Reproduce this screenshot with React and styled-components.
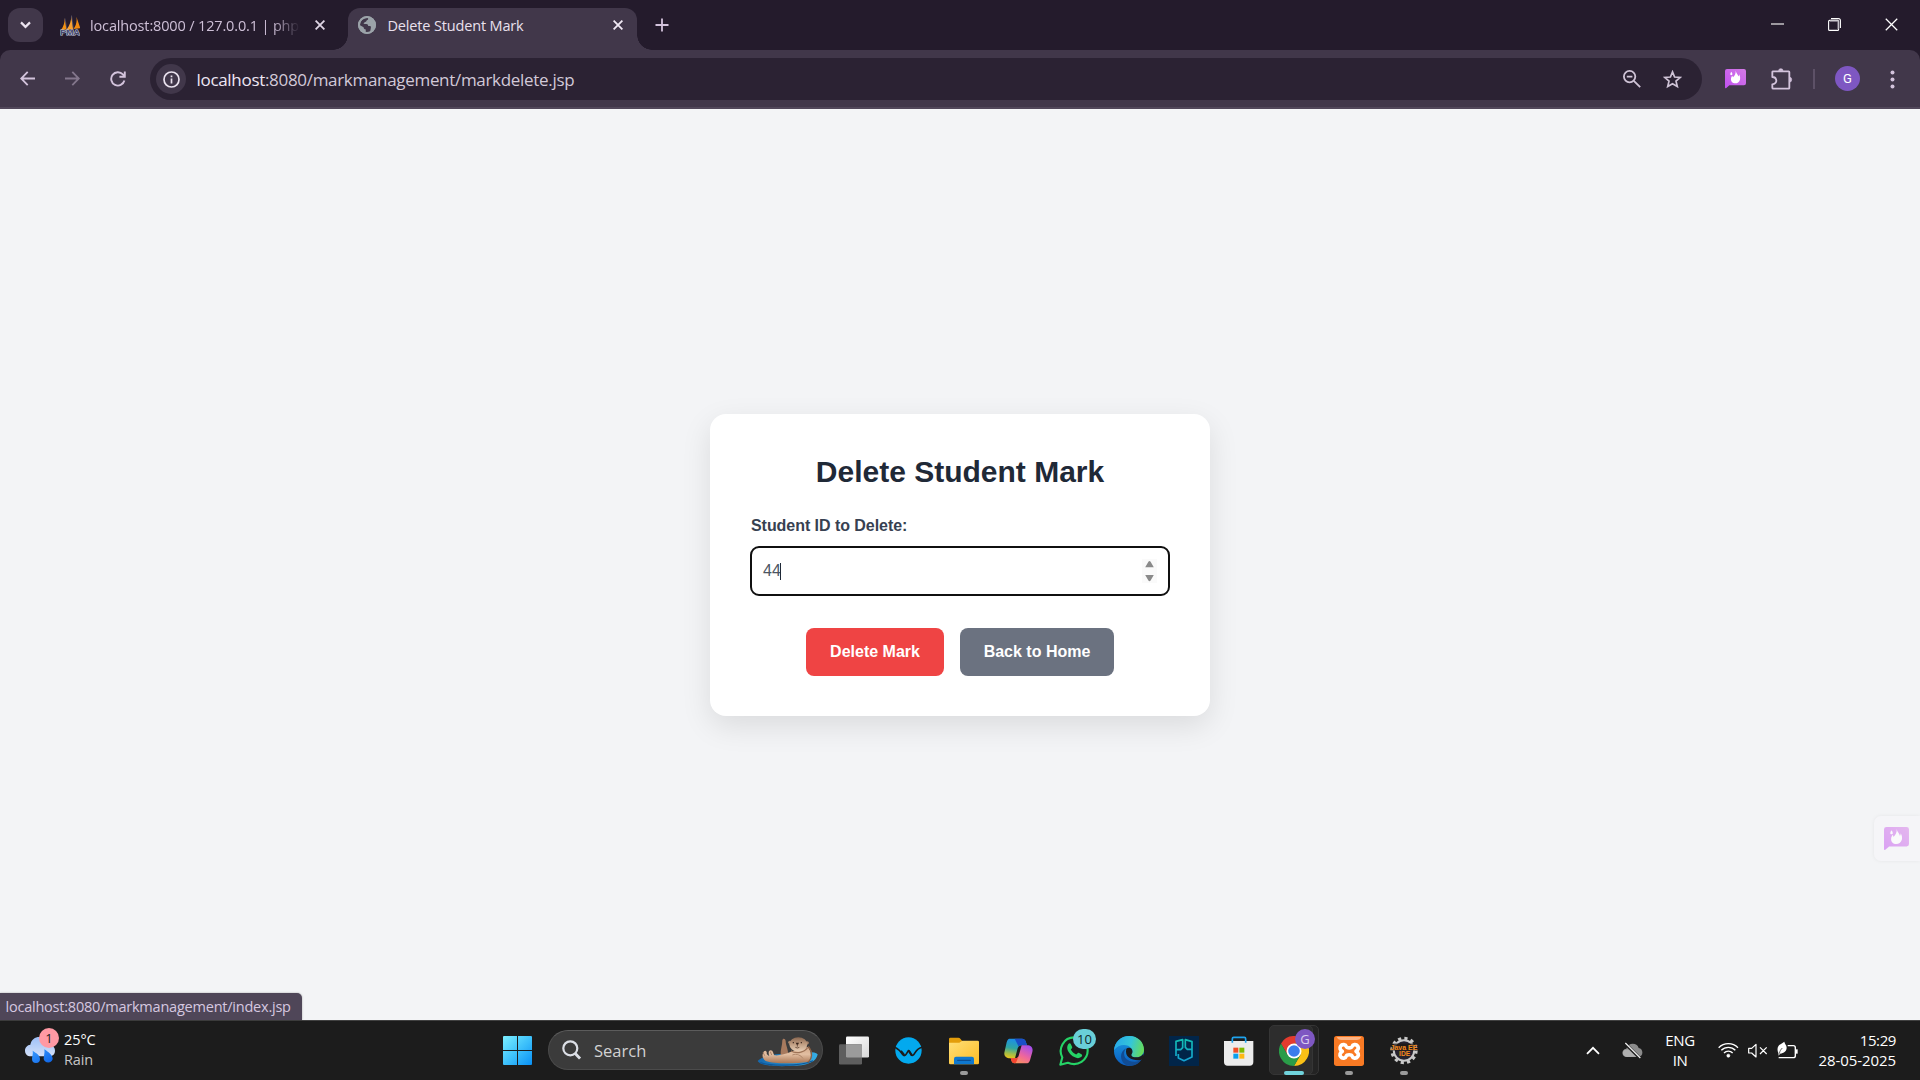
import React from "react";
import styled, { createGlobalStyle, css } from "styled-components";

const Global = createGlobalStyle`
  * { box-sizing: border-box; }
  html, body { margin: 0; padding: 0; background: #f3f4f6; }
  body { overflow: hidden; }
  svg { display: block; flex: none; }
`;

const ui = `"Open Sans", "Noto Sans", sans-serif`;
const arial = `"Liberation Sans", Arial, sans-serif`;

const Screen = styled.div`
  width: 1920px;
  height: 1080px;
  display: flex;
  flex-direction: column;
  font-family: ${ui};
  overflow: hidden;
`;

/* ---------- tab strip ---------- */
const TabStrip = styled.header`
  height: 50px;
  background: #241b2c;
  display: flex;
  align-items: flex-start;
  padding-left: 8px;
`;
const TabSearch = styled.button`
  width: 35px;
  height: 34px;
  margin: 8px 9px 0 0;
  padding: 0;
  border: 0;
  border-radius: 12px;
  background: #41374a;
  display: grid;
  place-items: center;
`;
const Tab = styled.div`
  position: relative;
  margin-top: 8px;
  height: 42px;
  padding: 0 10px 8px 10px;
  display: flex;
  align-items: center;
  border-radius: 12px 12px 0 0;
  color: ${(p) => (p.$active ? "#e9e0ee" : "#cdbfd6")};
  width: ${(p) => (p.$active ? 289 : 288)}px;
  padding-left: ${(p) => (p.$active ? 10 : 8)}px;
  ${(p) =>
    p.$active &&
    css`
      background: #41374a;
      margin-left: 8px;
      &::before,
      &::after {
        content: "";
        position: absolute;
        bottom: 0;
        width: 15px;
        height: 15px;
      }
      &::before {
        left: -15px;
        background: radial-gradient(circle at 0 0, transparent 14.5px, #41374a 15px);
      }
      &::after {
        right: -15px;
        background: radial-gradient(circle at 100% 0, transparent 14.5px, #41374a 15px);
      }
    `}
`;
const TabTitle = styled.span`
  flex: 1;
  margin-left: ${(p) => p.$gap}px;
  padding-top: 2px;
  font-size: 14.5px;
  line-height: 20px;
  letter-spacing: ${(p) => p.$track}px;
  white-space: nowrap;
  ${(p) =>
    p.$fade &&
    css`
      flex: none;
      width: 216px;
      margin-right: -8px;
      mask-image: linear-gradient(90deg, #000 182px, transparent 210px);
    `}
`;
const TabClose = styled.span`
  margin-left: auto;
  margin-right: ${(p) => p.$right}px;
`;
const NewTab = styled.span`
  margin: 18px 0 0 18px;
`;
const WindowControls = styled.div`
  margin-left: auto;
  display: flex;
  height: 49px;
  align-items: center;
  & > span {
    width: 57px;
    display: grid;
    place-items: center;
  }
`;

/* ---------- toolbar ---------- */
const ToolbarBack = styled.div`
  background: #241b2c;
  height: 59px;
`;
const Toolbar = styled.nav`
  height: 59px;
  background: #41374a;
  border-radius: 10px 10px 0 0;
  border-bottom: 2px solid #51475a;
  display: flex;
  align-items: center;
  color: #d3c3dc;
`;
const NavButton = styled.span`
  width: 45px;
  display: grid;
  place-items: center;
  opacity: ${(p) => (p.$off ? 0.45 : 1)};
`;
const NavGroup = styled.div`
  display: flex;
  width: 145px;
  padding-left: 5px;
`;
const Omnibox = styled.div`
  width: 1552px;
  height: 42px;
  margin: 1px 0 0 5px;
  border-radius: 21px;
  background: #2b2233;
  display: flex;
  align-items: center;
  padding: 0 20px 0 6px;
`;
const SiteInfo = styled.span`
  width: 30px;
  height: 30px;
  border-radius: 50%;
  background: #41374a;
  display: grid;
  place-items: center;
`;
const Url = styled.span`
  margin-left: 10.5px;
  flex: 1;
  padding-top: 1px;
  font-size: 17px;
  line-height: 24px;
  letter-spacing: -0.31px;
  color: #d2c9d8;
  b {
    font-weight: 400;
    color: #efe7f4;
  }
`;
const OmniIcons = styled.div`
  display: flex;
  gap: 22px;
  align-items: center;
`;
const Extensions = styled.div`
  flex: 1;
  display: flex;
  align-items: center;
  padding-left: 23px;
  padding-top: 1px;
`;
const Divider = styled.span`
  width: 2px;
  height: 20px;
  margin: 0 20px 0 20px;
  background: #5d5167;
`;
const Avatar = styled.span`
  width: 25px;
  height: 25px;
  border-radius: 50%;
  background: #7e57c2;
  color: #fff;
  font: 400 13px/25px Roboto, sans-serif;
  text-align: center;
  margin: -1px 30px 0 0;
`;

/* ---------- page ---------- */
const Page = styled.main`
  position: relative;
  height: 911px;
  background: #f3f4f6;
  display: flex;
  align-items: center;
  justify-content: center;
  font-family: ${arial};
`;
const Card = styled.div`
  width: 500px;
  height: 302px;
  margin-top: 1px;
  padding: 41px 40px 40px;
  border-radius: 16px;
  background: #fff;
  box-shadow: 0 10px 30px rgba(0, 0, 0, 0.1);
`;
const Title = styled.h2`
  margin: 0;
  font-size: 30px;
  line-height: 34px;
  font-weight: 700;
  color: #1f2937;
  text-align: center;
`;
const Label = styled.label`
  display: block;
  font-size: 16px;
  line-height: 20px;
  font-weight: 700;
  color: #374151;
  padding-left: 1px;
  margin-top: 27px;
  letter-spacing: -0.05px;
`;
const Field = styled.div`
  margin-top: 10px;
  height: 50px;
  border: 2px solid #101010;
  border-radius: 9px;
  padding: 0 11px;
  display: flex;
  align-items: center;
  font-size: 16px;
  color: #4b5563;
`;
const Caret = styled.i`
  width: 1px;
  height: 17px;
  margin-left: -1px;
  background: #1f2937;
`;
const Spinner = styled.span`
  margin-left: auto;
  width: 15px;
  height: 24px;
  background: #fafafa;
`;
const Actions = styled.div`
  margin-top: 32px;
  display: flex;
  justify-content: center;
  gap: 16px;
`;
const Button = styled.button`
  width: ${(p) => p.$width}px;
  height: 48px;
  border: 0;
  padding: 0 0 1px;
  border-radius: 8px;
  background: ${(p) => p.$bg};
  color: #fff;
  font: 700 16px ${arial};
`;
const SideWidget = styled.div`
  position: absolute;
  right: 0;
  top: 707px;
  width: 46px;
  height: 45px;
  border-radius: 7px 0 0 7px;
  background: #f5f5f8;
  box-shadow: 0 0 4px rgba(0, 0, 0, 0.06);
  padding: 11px 0 0 10px;
  svg { opacity: 0.5; }
`;
const StatusBubble = styled.div`
  position: absolute;
  left: 0;
  bottom: 0;
  width: 302px;
  height: 27px;
  padding-left: 5.5px;
  border-radius: 0 5px 0 0;
  background: #4f4658;
  box-shadow: 0 0 2px rgba(0, 0, 0, 0.35);
  color: #d6c8e0;
  font: 400 14.5px/27px ${ui};
  letter-spacing: -0.22px;
  white-space: nowrap;
`;

/* ---------- taskbar ---------- */
const Taskbar = styled.footer`
  height: 60px;
  border-top: 1px solid #414141;
  background: #1c1c1c;
  display: grid;
  grid-template-columns: 490px 941px 489px;
  color: #fff;
`;
const Weather = styled.div`
  display: flex;
  padding-left: 24px;
`;
const WeatherIcon = styled.div`
  padding-top: 11px;
`;
const WeatherText = styled.div`
  padding: 9px 0 0 8px;
  font-size: 14.5px;
  line-height: 20px;
  letter-spacing: -0.1px;
  div + div { color: #c6c6c6; }
`;
const Dock = styled.div`
  display: flex;
  height: 59px;
`;
const DockItem = styled.div`
  position: relative;
  width: 55px;
  height: 59px;
  display: flex;
  align-items: center;
  justify-content: center;
  ${(p) =>
    p.$running &&
    css`
      &::after {
        content: "";
        position: absolute;
        bottom: 5px;
        left: 50%;
        width: ${p.$running === "active" ? 20 : 8}px;
        height: 4px;
        border-radius: 2px;
        transform: translateX(-50%);
        background: ${p.$running === "active" ? "#70d3dc" : "#9a9a9a"};
      }
    `}
`;
const Sheet = styled.span`
  position: absolute;
  top: 4px;
  left: ${(p) => p.$left}px;
  width: 44px;
  height: 50px;
  border-radius: 5px;
  border: 1px solid #353535;
  background: ${(p) => p.$bg};
`;
const Over = styled.span`
  position: relative;
`;
const Badge = styled.span`
  position: absolute;
  left: ${(p) => p.$left}px;
  top: ${(p) => p.$top}px;
  min-width: 20px;
  width: ${(p) => p.$width}px;
  height: 20px;
  border-radius: 10px;
  text-align: center;
  background: ${(p) => p.$bg};
  color: ${(p) => p.$color};
  font: 400 13px/20px ${ui};
`;
const SearchBox = styled.div`
  width: 275px;
  height: 40px;
  margin: 9px 3px 0;
  border-radius: 20px;
  background: #3b3b3b;
  border: 1px solid #4b4b4b;
  border-top-color: #5c5c5c;
  display: flex;
  align-items: center;
  padding: 0 4px 0 13px;
  span {
    flex: 1;
    margin-left: 13px;
    padding-top: 2px;
    font-size: 16.5px;
    line-height: 24px;
    letter-spacing: 0;
    color: #d2d2d2;
  }
`;
const OtterSlot = styled.div`
  padding-top: 2px;
`;
const Tray = styled.div`
  display: flex;
  align-items: center;
  padding: 0 24px 1px 155px;
  height: 59px;
`;
const Lang = styled.div`
  width: 40px;
  margin-left: 17px;
  text-align: center;
  font-size: 15px;
  line-height: 20px;
  letter-spacing: -0.4px;
`;
const TrayStatus = styled.div`
  display: flex;
  align-items: center;
  margin-left: 18px;
  gap: 9px;
`;
const Clock = styled.div`
  margin-left: auto;
  text-align: right;
  font-size: 15px;
  line-height: 20px;
  letter-spacing: -0.07px;
  white-space: nowrap;
  div:first-child { letter-spacing: -0.4px; }
`;
const CloudSlot = styled.span`
  margin: 1px 0 0 22px;
`;
const PuzzleSlot = styled.span`
  margin-left: 25px;
`;

/* ---------- icons ---------- */
const Cross = ({ c, s = 10, w = 1.8 }) => (
  <svg width={s} height={s} viewBox="0 0 10 10" stroke={c} strokeWidth={w} fill="none">
    <path d="M.6.6l8.8 8.8M9.4.6L.6 9.4" />
  </svg>
);

const PmaIcon = () => (
  <svg width="20" height="21" viewBox="179 44 61 63">
    <path d="M182 89C190 79 194 66 193 53L199 88Z" fill="#f29111" />
    <path d="M198 89C209 76 214 60 213 45L219 87Z" fill="#f7a032" />
    <path d="M220 86C229 74 231 62 229 49L241 84Z" fill="#f08a12" />
    <path d="M194 54l6 33M214 45l6 40" stroke="#6b7096" strokeWidth="1.5" fill="none" />
    <text x="180" y="105" textLength="60" lengthAdjust="spacingAndGlyphs" fontFamily="Liberation Sans, sans-serif" fontWeight="700" fontSize="21" fill="#44486e" stroke="#c6c8de" strokeWidth="2.6" paintOrder="stroke">PMA</text>
  </svg>
);

const GlobeIcon = () => (
  <svg width="18" height="18" viewBox="0 0 18 18">
    <circle cx="9" cy="9" r="9" fill="#9ba3a9" />
    <path d="M1.9 8.8C2 5.7 4.2 3 7.3 2.2L10 1.9C10.6 3 9.9 4 8.7 4.2 8.8 5.5 7.6 5.9 6.5 6.1 6.6 7.1 6 7.6 5.4 8H8.3C9.6 8 10.2 8.9 10.2 10.1H11.9C12.5 10.1 13 10.7 12.9 11.4L12.2 15.4C11 16.2 9.4 16.4 7.7 16.1L7.8 13.5C6.2 13.3 5.6 12.4 5.6 11.2L2 9.2Z" fill="#41374a" />
    <path d="M9 0a9 9 0 1 0 0 18A9 9 0 0 0 9 0Zm0 2a7 7 0 1 1 0 14A7 7 0 0 1 9 2Z" fill="#9ba3a9" />
  </svg>
);

const FlameIcon = ({ s = 21 }) => (
  <svg width={s} height={s * 0.92} viewBox="435 209 63 58">
    <defs>
      <linearGradient id="fl" x1="0" y1="1" x2="1" y2="0">
        <stop offset="0" stopColor="#c050f0" />
        <stop offset="1" stopColor="#d47be6" />
      </linearGradient>
    </defs>
    <path d="M441 209h51q6 0 6 6v37q0 6-6 6h-44l-9 8q-4 3-4-2v-49q0-6 6-6Z" fill="url(#fl)" />
    <path d="M467 214C468 221 474 225 475 231 477 230 477 227 477 225 481 231 481 237 480 241 478 248 472 252 466 252 458 252 452 246 453 238 453 234 455 232 456 229 458 230 459 232 459 234 464 229 468 222 467 214Z" fill="#fff" />
    <path d="M454 217Q458 221 457 226 454 229 451 226 450 221 454 217Z" fill="#fff" />
  </svg>
);

const WinLogo = () => (
  <svg width="29" height="29" viewBox="0 0 29 29">
    <defs>
      <linearGradient id="wn" x1="0" y1="0" x2="29" y2="29" gradientUnits="userSpaceOnUse">
        <stop offset="0" stopColor="#7cefff" />
        <stop offset=".5" stopColor="#3fc2fb" />
        <stop offset="1" stopColor="#0990f5" />
      </linearGradient>
    </defs>
    <path fill="url(#wn)" d="M0 1Q0 0 1 0H14V14H0ZM15 0H28Q29 0 29 1V14H15ZM0 15H14V29H1Q0 29 0 28ZM15 15H29V28Q29 29 28 29H15Z" />
  </svg>
);

const Otter = () => (
  <svg width="61" height="31" viewBox="832 63 183 93">
    <defs>
      <linearGradient id="of" x1="0" y1="0" x2="0" y2="1">
        <stop offset="0" stopColor="#d3a888" />
        <stop offset=".45" stopColor="#e3bfa2" />
        <stop offset="1" stopColor="#a87553" />
      </linearGradient>
      <linearGradient id="oh" x1="0" y1="0" x2="0" y2="1">
        <stop offset="0" stopColor="#8a6750" />
        <stop offset=".45" stopColor="#bd9a7e" />
        <stop offset="1" stopColor="#e8cfb6" />
      </linearGradient>
      <linearGradient id="ow" x1="0" y1="0" x2="1" y2="0">
        <stop offset="0" stopColor="#1568ae" />
        <stop offset="1" stopColor="#35aee6" />
      </linearGradient>
    </defs>
    <path d="M834 138C846 122 900 114 940 117 980 108 1006 110 1014 118 1010 140 986 153 930 153 880 155 840 151 834 138Z" fill="url(#ow)" />
    <path d="M842 143C870 153 960 155 1000 137" stroke="#0d579b" strokeWidth="3.5" fill="none" />
    <path d="M903 120C902 104 908 92 908 76 909 69 917 70 918 78 918 90 925 100 926 120Z" fill="#a77a5e" />
    <path d="M858 138C845 128 848 116 853 109 858 104 863 110 861 117L869 124C865 112 867 107 873 106 881 106 880 116 884 121 900 123 918 116 932 111 938 108 944 106 950 104L984 96C996 108 998 132 984 141 950 146 880 147 858 138Z" fill="url(#of)" />
    <path d="M934 107C946 116 970 116 984 98" stroke="#9d7357" strokeWidth="4" fill="none" />
    <path d="M938 120C952 114 964 122 970 130" stroke="#b0876a" strokeWidth="3" fill="none" />
    <path d="M986 94C1000 112 998 132 984 142" stroke="#8d6144" strokeWidth="4" fill="none" />
    <circle cx="930" cy="82" r="4.5" fill="#a5826a" />
    <circle cx="983" cy="83" r="4.5" fill="#a5826a" />
    <ellipse cx="956" cy="88" rx="27" ry="21.5" fill="url(#oh)" />
    <path d="M948 83h10l-3 6h-4Z" fill="#38251c" />
    <path d="M953 89v6M947 97q6 4 12 0" stroke="#4d3325" strokeWidth="2.2" fill="none" />
    <circle cx="941" cy="83" r="2" fill="#2b1c15" />
    <circle cx="965" cy="83" r="2" fill="#2b1c15" />
    <path d="M850 112l5 10M872 110l4 10" stroke="#9c7257" strokeWidth="2.4" />
  </svg>
);

const TaskView = () => (
  <svg width="30" height="29" viewBox="57 59 90 86">
    <defs>
      <linearGradient id="tv" x1="0" y1="0" x2="1" y2="1">
        <stop offset="0" stopColor="#fff" />
        <stop offset="1" stopColor="#d8d8d8" />
      </linearGradient>
    </defs>
    <rect x="78" y="60" width="69" height="63" rx="4" fill="url(#tv)" />
    <rect x="57" y="83" width="69" height="61" rx="4" fill="#5e5e5e" />
    <path d="M78 83h44q4 0 4 4v36H82q-4 0-4-4Z" fill="#9b9b9b" />
  </svg>
);

const WIcon = () => (
  <svg width="27" height="27" viewBox="226 60 82 82">
    <circle cx="267" cy="101" r="40" fill="#03a9ee" />
    <path d="M225 91C238 96 243 103 250 114 253 118 257 117 260 112L267 101 274 113C278 118 282 116 286 109 291 101 298 93 309 91" stroke="#1c1c1c" strokeWidth="5" fill="none" strokeLinejoin="round" />
    <path d="M244 102Q250 108 254 115M268 101Q272 107 277 115" stroke="#1c1c1c" strokeWidth="6" fill="none" />
  </svg>
);

const Folder = () => (
  <svg width="30" height="28" viewBox="387 61 90 84">
    <defs>
      <linearGradient id="fd" x1="0" y1="0" x2="1" y2="1">
        <stop offset="0" stopColor="#ffdf78" />
        <stop offset="1" stopColor="#fdbd25" />
      </linearGradient>
    </defs>
    <path d="M387 67q0-4 4-4h24q4 0 6 3l5 6v14h-39Z" fill="#e39d0b" />
    <path d="M387 78h31l9-6h46q4 0 4 4v63q0 4-4 4h-82q-4 0-4-4Z" fill="url(#fd)" />
    <path d="M402 143v-17q0-6 6-6h48q6 0 6 6v17Z" fill="#0f78cf" />
    <path d="M413 131h38" stroke="#0b4f94" strokeWidth="4" strokeLinecap="round" />
  </svg>
);

const Copilot = () => (
  <svg width="29" height="26" viewBox="554 62 87 78">
    <defs>
      <linearGradient id="c1" x1=".3" y1="0" x2=".1" y2="1">
        <stop offset="0" stopColor="#1c8fe8" />
        <stop offset=".45" stopColor="#2fa6a2" />
        <stop offset=".75" stopColor="#a5bd45" />
        <stop offset="1" stopColor="#f3c416" />
      </linearGradient>
      <linearGradient id="c2" x1=".8" y1="0" x2=".2" y2="1">
        <stop offset="0" stopColor="#a24df0" />
        <stop offset=".55" stopColor="#f0679a" />
        <stop offset="1" stopColor="#fb9a57" />
      </linearGradient>
    </defs>
    <path d="M570 64h38c6 0 9 3 11 8l4 12h-16c-6 0-10 3-12 9l-8 30h-14c-14 0-21-8-17-21l6-27c2-7 5-11 8-11Z" fill="url(#c1)" />
    <path d="M586 64h22c6 0 9 3 11 8l4 12h-16c-4 0-7 1-9 4Z" fill="#1a4fc8" />
    <path d="M624 138h-38c-6 0-9-4-10-9l-2-6h13c6 0 9-3 11-8l9-31h16c13 0 19 8 16 20l-7 25c-2 6-5 9-8 9Z" fill="url(#c2)" />
    <path d="M574 123h13c6 0 9-3 11-8l-6 17q-2 6-6 6c-6 0-10-6-12-15Z" fill="#f4452f" />
  </svg>
);

const WhatsApp = () => (
  <svg width="30" height="30" viewBox="716 57 91 91">
    <path d="M720 144l6-22c-14-26 4-61 36-61 23 0 41 18 41 40 0 29-30 50-60 37Z" fill="#1c1c1c" stroke="#25d366" strokeWidth="6.5" strokeLinejoin="round" />
    <path d="M744 82c3-4 7-3 8 0l4 8c1 3-3 6-4 8 3 7 9 12 16 15 3-1 5-6 8-5l8 4c4 2 2 7-1 9-9 7-22 1-30-6-8-8-17-21-9-33Z" fill="#25d366" />
  </svg>
);

const Edge = () => (
  <svg width="30" height="30" viewBox="42 57 90 90">
    <defs>
      <linearGradient id="e1" x1="0" y1=".3" x2="1" y2=".5">
        <stop offset="0" stopColor="#27a9ea" />
        <stop offset=".55" stopColor="#35c6d8" />
        <stop offset="1" stopColor="#66dc58" />
      </linearGradient>
      <linearGradient id="e2" x1="0" y1="0" x2="0" y2="1">
        <stop offset="0" stopColor="#1b9de2" />
        <stop offset="1" stopColor="#0a5cc0" />
      </linearGradient>
    </defs>
    <circle cx="87" cy="102" r="45" fill="url(#e2)" />
    <path d="M42 100C44 74 63 57 88 57 114 57 132 76 132 98 132 113 121 121 107 121 96 121 92 115 95 111 99 106 98 99 94 94 84 80 55 80 42 100Z" fill="url(#e1)" />
    <path d="M79 94C66 108 71 134 103 134 114 134 123 128 126 125 114 146 88 152 75 142 58 128 59 104 79 94Z" fill="#114c94" />
    <path d="M79 95C84 90 92 92 95 96 98 101 98 107 95 111 92 115 96 121 107 121 117 121 126 117 130 110L132 124 122 129C100 132 72 122 79 95Z" fill="#1c1c1c" />
  </svg>
);

const PgIcon = () => (
  <svg width="30" height="30" viewBox="207 57 90 90">
    <defs>
      <linearGradient id="pg" x1="0" y1="66" x2="0" y2="132" gradientUnits="userSpaceOnUse">
        <stop offset="0" stopColor="#12bdb2" />
        <stop offset="1" stopColor="#14a2d2" />
      </linearGradient>
    </defs>
    <rect x="207" y="57" width="90" height="90" fill="#012549" />
    <path d="M228 117V73L248 68V92L242 98H229M276 97H262L256 91V68L276 74V120L252 131 235 123V111" fill="none" stroke="url(#pg)" strokeWidth="5" strokeLinejoin="round" />
  </svg>
);

const Store = () => (
  <svg width="30" height="30" viewBox="371 58 90 90">
    <path d="M396 76v-10q0-4 4-4h32q4 0 4 4v10" stroke="#1ea3ee" strokeWidth="5" fill="none" />
    <path d="M371 73h88v63q0 11-11 11h-66q-11 0-11-11Z" fill="#ececec" />
    <path d="M396 73v5M436 73v5" stroke="#1ea3ee" strokeWidth="5" />
    <path d="M399 93h15v15h-15Z" fill="#f04e26" />
    <path d="M417 93h15v15h-15Z" fill="#7fba00" />
    <path d="M399 111h15v15h-15Z" fill="#0aa0ee" />
    <path d="M417 111h15v15h-15Z" fill="#fdb813" />
  </svg>
);

const ChromeIcon = () => (
  <svg width="30" height="30" viewBox="-45 -45 90 90">
    <path d="M-39-22.5A45 45 0 0 1 39-22.5L0-22.5-19.5 11.2Z" fill="#e33b2e" />
    <path d="M39-22.5A45 45 0 0 1 0 45L19.5 11.2 0-22.5Z" fill="#fbc116" />
    <path d="M0 45A45 45 0 0 1-39-22.5L-19.5 11.2 19.5 11.2Z" fill="#2a9c48" />
    <circle r="22.5" fill="#fff" />
    <circle r="17.5" fill="#3b7ded" />
  </svg>
);

const Xampp = () => (
  <svg width="30" height="30" viewBox="702 57 90 90">
    <rect x="702" y="57" width="90" height="90" rx="8" fill="#f97a24" />
    <path d="M710 60h74q-4 9-14 9h-46q-10 0-14-9Z" fill="#fcb485" />
    <path d="M722 87C727 80 737 82 739 89 741 94 754 94 756 89 758 82 768 80 773 87 777 93 774 99 768 103 775 107 777 114 773 119 768 126 758 124 756 117 754 112 741 112 739 117 737 124 727 126 722 119 718 114 720 107 727 103 720 99 718 93 722 87Z" fill="#f97a24" stroke="#fff" strokeWidth="11" strokeLinejoin="round" />
  </svg>
);

const JavaEE = () => (
  <svg width="30" height="29" viewBox="866 58 90 88">
    <circle cx="911" cy="102" r="37" fill="none" stroke="#c9c9c9" strokeWidth="9" strokeDasharray="9.7 9.67" />
    <circle cx="911" cy="102" r="31" fill="#26232f" stroke="#c9c9c9" strokeWidth="6" />
    <path d="M873 81h76v21h-76Z" fill="#1d1712" opacity=".75" />
    <text x="911" y="99" textAnchor="middle" textLength="82" lengthAdjust="spacingAndGlyphs" fontFamily="Liberation Sans, sans-serif" fontWeight="700" fontSize="21" fill="#f58a1c">Java EE</text>
    <text x="913" y="119" textAnchor="middle" textLength="34" lengthAdjust="spacingAndGlyphs" fontFamily="Liberation Sans, sans-serif" fontWeight="700" fontSize="21" fill="#f58a1c">IDE</text>
  </svg>
);

const RainIcon = () => (
  <svg width="32" height="32" viewBox="72 157 96 96">
    <defs>
      <linearGradient id="rc" x1="0" y1="0" x2="0" y2="1">
        <stop offset="0" stopColor="#9dc0f8" />
        <stop offset="1" stopColor="#d3e0f8" />
      </linearGradient>
      <linearGradient id="rd" x1="0" y1="0" x2="1" y2="1">
        <stop offset="0" stopColor="#3a9cff" />
        <stop offset="1" stopColor="#0b62e6" />
      </linearGradient>
    </defs>
    <path d="M93 230c-12 0-18-8-18-17 0-10 7-17 16-18 3-15 14-23 27-23 16 0 26 10 28 24 12 0 19 7 19 17 0 11-8 17-18 17Z" fill="url(#rc)" />
    <path d="M98 213c12 8 22 14 22 25a12 12 0 0 1-24 0c0-8 4-16 2-25ZM133 209c13 9 25 17 25 29a14 14 0 0 1-27 0c0-9 4-18 2-29Z" fill="url(#rd)" />
  </svg>
);

export default function App() {
  return (
    <Screen>
      <Global />
      <TabStrip>
        <TabSearch>
          <svg width="11" height="8" viewBox="0 0 11 8" fill="none" stroke="#ece4f0" strokeWidth="2.2">
            <path d="M1 1.4l4.5 4.5L10 1.4" />
          </svg>
        </TabSearch>
        <Tab>
          <PmaIcon />
          <TabTitle $gap={10} $track={-0.15} $fade>localhost:8000 / 127.0.0.1 | phpM</TabTitle>
          <TabClose $right={5}><Cross c="#dfd5e5" /></TabClose>
        </Tab>
        <Tab $active>
          <GlobeIcon />
          <TabTitle $gap={11.5} $track={-0.16}>Delete Student Mark</TabTitle>
          <TabClose $right={4.5}><Cross c="#f1e9f5" /></TabClose>
        </Tab>
        <NewTab>
          <svg width="14" height="14" viewBox="0 0 14 14" stroke="#d3c3dc" strokeWidth="1.8"><path d="M7 .5v13M.5 7h13" /></svg>
        </NewTab>
        <WindowControls>
          <span><svg width="13" height="3" viewBox="0 0 13 3"><path d="M0 1h13" stroke="#fff" strokeWidth="1.1" /></svg></span>
          <span>
            <svg width="13" height="13" viewBox="0 0 13 13" fill="none" stroke="#fff" strokeWidth="1.1">
              <rect x=".6" y="2.4" width="10" height="10" rx="1" />
              <path d="M3 .6h7.4q2 0 2 2V10" />
              <path d="M2 3.1h8v8" stroke="#9a93a0" />
            </svg>
          </span>
          <span><Cross c="#fff" s={13} w={0.95} /></span>
        </WindowControls>
      </TabStrip>

      <ToolbarBack>
        <Toolbar>
          <NavGroup>
            <NavButton>
              <svg width="15" height="15" viewBox="0 0 15 15" fill="none" stroke="currentColor" strokeWidth="1.8"><path d="M15 7.5H1.4M7.7.8L1.2 7.5l6.5 6.7" /></svg>
            </NavButton>
            <NavButton $off>
              <svg width="15" height="15" viewBox="0 0 15 15" fill="none" stroke="currentColor" strokeWidth="1.8"><path d="M0 7.5h13.6M7.3.8l6.5 6.7-6.5 6.7" /></svg>
            </NavButton>
            <NavButton>
              <svg width="16" height="16" viewBox="0 0 16 16" fill="none" stroke="currentColor" strokeWidth="1.9"><path d="M14.4 9.6A6.7 6.7 0 1 1 12.9 3.4L14.6 5.4M14.8.4V5.7H9.4" /></svg>
            </NavButton>
          </NavGroup>
          <Omnibox>
            <SiteInfo>
              <svg width="17" height="17" viewBox="0 0 17 17" fill="none" stroke="#eae2ee" strokeWidth="1.7"><circle cx="8.5" cy="8.5" r="7.5" /><path d="M8.5 7.4v5M8.5 4.4v1.8" /></svg>
            </SiteInfo>
            <Url><b>localhost</b>:8080/markmanagement/markdelete.jsp</Url>
            <OmniIcons>
              <svg width="18" height="18" viewBox="0 0 18 18" fill="none" stroke="#cfc3d6" strokeWidth="1.8"><circle cx="6.6" cy="6.6" r="5.7" /><path d="M10.8 10.8l6.4 6.4M3.8 6.6h5.6" /></svg>
              <svg width="19" height="19" viewBox="0 0 19 19" fill="none" stroke="#cfc3d6" strokeWidth="1.7"><path d="M9.5 1.9l2.1 5.1 5.7.4-4.3 3.7 1.3 5.5-4.8-2.9-4.8 2.9 1.3-5.5L1.7 7.4l5.7-.4Z" /></svg>
            </OmniIcons>
          </Omnibox>
          <Extensions>
            <FlameIcon />
            <PuzzleSlot>
              <svg width="22" height="22" viewBox="572 203 66 66" fill="none" stroke="#d3c3dc" strokeWidth="5.5" strokeLinejoin="round">
                <path d="M577 213h48q2 0 2 2v48q0 2-2 2h-46q-3 0-3-3v-10c10-2 14-8 11-15-1-5-5-7-11-7v-15q0-2 1-2Z" />
                <path d="M595 211a6.5 6 0 0 1 13 0ZM628 231a6 7 0 0 1 0 14Z" fill="#d3c3dc" strokeWidth="2" />
              </svg>
            </PuzzleSlot>
            <Divider />
            <Avatar>G</Avatar>
            <svg width="5" height="19" viewBox="0 0 5 19" fill="#d3c3dc"><circle cx="2.5" cy="2.5" r="2" /><circle cx="2.5" cy="9.5" r="2" /><circle cx="2.5" cy="16.5" r="2" /></svg>
          </Extensions>
        </Toolbar>
      </ToolbarBack>

      <Page>
        <Card>
          <Title>Delete Student Mark</Title>
          <Label>Student ID to Delete:</Label>
          <Field>
            <span>44</span>
            <Caret />
            <Spinner>
              <svg width="15" height="24" viewBox="0 0 15 24" fill="#8a8a8a"><path d="M3.2 8.2L6.4 2.8q1.1-1.6 2.2 0L11.8 8.2ZM3.2 16L6.4 21.4q1.1 1.6 2.2 0L11.8 16Z" /></svg>
            </Spinner>
          </Field>
          <Actions>
            <Button $width={138} $bg="#ef4444">Delete Mark</Button>
            <Button $width={154} $bg="#6b7280">Back to Home</Button>
          </Actions>
        </Card>
        <SideWidget><FlameIcon s={25} /></SideWidget>
        <StatusBubble>localhost:8080/markmanagement/index.jsp</StatusBubble>
      </Page>

      <Taskbar>
        <Weather>
          <Over>
            <WeatherIcon><RainIcon /></WeatherIcon>
            <Badge $left={15} $top={7} $width={20} $bg="#ff99a4" $color="#1c1c1c">1</Badge>
          </Over>
          <WeatherText>
            <div>25°C</div>
            <div>Rain</div>
          </WeatherText>
        </Weather>
        <Dock>
          <DockItem><WinLogo /></DockItem>
          <SearchBox>
            <svg width="19" height="20" viewBox="0 0 19 20" fill="none" stroke="#dcdfe6" strokeWidth="2.2"><circle cx="8.3" cy="8.3" r="7" /><path d="M13 13.2l5 5.4" strokeWidth="2.8" /></svg>
            <span>Search</span>
            <OtterSlot><Otter /></OtterSlot>
          </SearchBox>
          <DockItem><TaskView /></DockItem>
          <DockItem><WIcon /></DockItem>
          <DockItem $running="idle"><Folder /></DockItem>
          <DockItem><Copilot /></DockItem>
          <DockItem>
            <WhatsApp />
            <Badge $left={27} $top={8} $width={23} $bg="#69cfd8" $color="#10282b">10</Badge>
          </DockItem>
          <DockItem><Edge /></DockItem>
          <DockItem><PgIcon /></DockItem>
          <DockItem><Store /></DockItem>
          <DockItem $running="active">
            <Sheet $left={9} $bg="#232323" />
            <Sheet $left={3} $bg="#2d2d2d" />
            <Over><ChromeIcon /></Over>
            <Badge $left={29} $top={8} $width={20} $bg="#7e57c2" $color="#d9cdee">G</Badge>
          </DockItem>
          <DockItem $running="idle"><Xampp /></DockItem>
          <DockItem $running="idle"><JavaEE /></DockItem>
        </Dock>
        <Tray>
          <svg width="14" height="9" viewBox="0 0 14 9" fill="none" stroke="#fff" strokeWidth="1.8"><path d="M1 7.8l6-6 6 6" /></svg>
          <CloudSlot>
            <svg width="21" height="17" viewBox="188 77 63 51">
              <path d="M203 122c-18 0-18-23-2-25 4-18 32-20 37-2 15 1 15 27-1 27Z" fill="#8b8b8b" />
              <path d="M203 122c-14-1-16-16-7-22l22-1 24 22Z" fill="#b0b0b0" />
              <path d="M197 81l45 45" stroke="#1c1c1c" strokeWidth="9" />
              <path d="M198 80l45 45" stroke="#f5f5f5" strokeWidth="3.5" />
            </svg>
          </CloudSlot>
          <Lang>
            <div>ENG</div>
            <div>IN</div>
          </Lang>
          <TrayStatus>
            <svg width="21" height="16" viewBox="473 76 63 48" fill="none" stroke="#fff" strokeWidth="4">
              <path d="M475 93a41 41 0 0 1 58 0M483 101a29 29 0 0 1 42 0M491 109a18 18 0 0 1 26 0" />
              <circle cx="504" cy="117" r="4.5" fill="#fff" strokeWidth="2" />
            </svg>
            <svg width="20" height="15" viewBox="563 79 60 45" fill="none" stroke="#fff" strokeWidth="3.6" strokeLinejoin="round">
              <path d="M565 95h9l13-12v38l-13-12h-9ZM599 92l20 20M619 92l-20 20" />
            </svg>
            <svg width="21" height="19" viewBox="652 70 63 57" fill="none" stroke="#fff" strokeWidth="4.2">
              <path d="M684 84h17q6 0 6 6v24q0 6-6 6h-44" />
              <path d="M711 95v13" strokeWidth="6" />
              <path d="M656 106c-6-14 0-24 8-27l10-7c0 6 7 9 7 18s-8 17-20 18l-4 6Z" fill="#fff" stroke="none" />
              <path d="M659 108c1-8 5-13 9-17" stroke="#1c1c1c" strokeWidth="2" />
            </svg>
          </TrayStatus>
          <Clock>
            <div>15:29</div>
            <div>28-05-2025</div>
          </Clock>
        </Tray>
      </Taskbar>
    </Screen>
  );
}
